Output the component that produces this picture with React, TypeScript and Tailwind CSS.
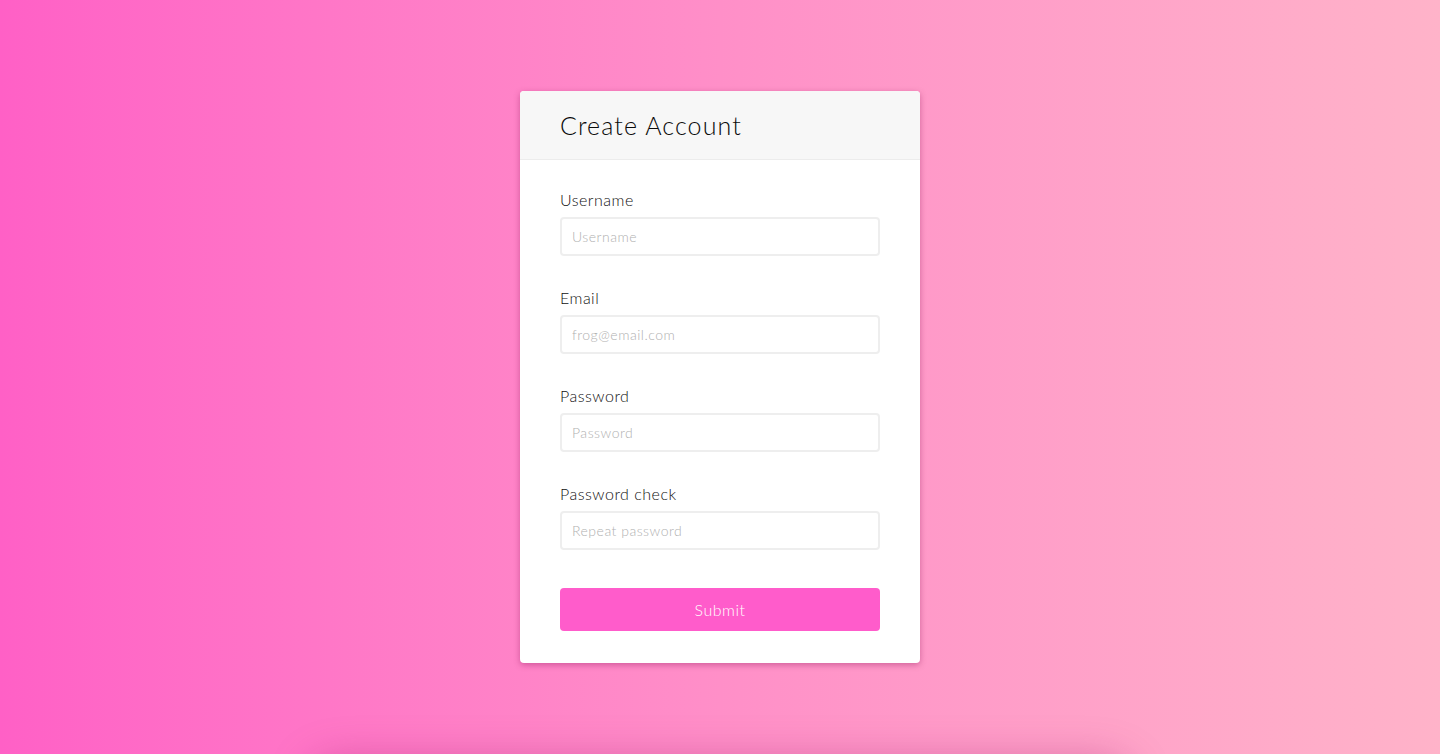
const fields = [
  { label: "Username", placeholder: "Username", type: "text" },
  { label: "Email", placeholder: "frog@email.com", type: "email" },
  { label: "Password", placeholder: "Password", type: "password" },
  { label: "Password check", placeholder: "Repeat password", type: "password" },
];

export default function App() {
  return (
    <div className="relative h-[754px] overflow-hidden bg-gradient-to-r from-[#ff60c6] via-[#ff8fc8] to-[#ffb3c9] font-['Lato','Open_Sans',sans-serif]">
      <div className="flex justify-center pt-[91px]">
        <div className="w-[400px] overflow-hidden rounded-[4px] bg-white shadow-[0_2px_6px_rgba(120,0,70,0.35)]">
          <div className="h-[69px] border-b border-[#ececec] bg-[#f7f7f7] px-10 pt-[19px]">
            <h1 className="text-[25px] font-light leading-[30px] tracking-[1.1px] text-[#0a0a0a]">Create Account</h1>
          </div>
          <form className="px-10 pt-[30px] pb-8" onSubmit={(e) => e.preventDefault()}>
            {fields.map((f) => (
              <div key={f.label} className="mb-[32px] flex flex-col">
                <label className="mb-[7px] text-[16px] font-light leading-5 tracking-[0.5px] text-[#111]">{f.label}</label>
                <input
                  type={f.type}
                  placeholder={f.placeholder}
                  className="h-[39px] rounded-[4px] border-2 border-[#eeeeee] px-[10px] text-[14px] font-light tracking-[0.5px] text-[#333] outline-none placeholder:text-[#b0b0b0]"
                />
              </div>
            ))}
            <button
              type="submit"
              className="mt-[6px] h-[43px] w-full rounded-[4px] bg-[#ff5ccb] text-[16px] font-light tracking-[0.5px] text-white"
            >
              Submit
            </button>
          </form>
        </div>
      </div>
      <div className="absolute left-[320px] right-[320px] top-[772px] h-10 rounded-full shadow-[0_0_40px_12px_rgba(150,20,100,0.35)]" />
    </div>
  );
}
